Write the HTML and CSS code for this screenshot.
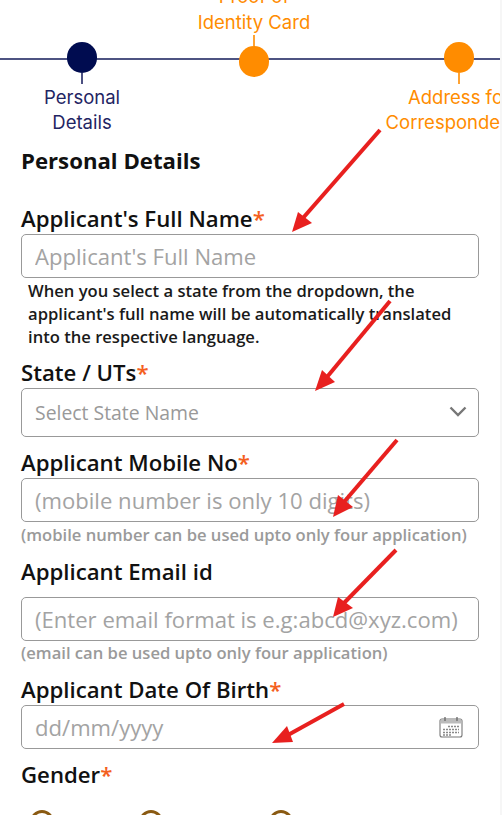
FILE: index.html
```html
<!DOCTYPE html>
<html>
<head>
<meta charset="UTF-8">
<title>Applicant Personal Details</title>
<meta name="viewport" content="width=device-width, initial-scale=1.0">
<link rel="stylesheet" href="styles.css">
</head>
<body>
<div class="page">

  <!-- STEPPER -->
  <div class="stepper">
    <div class="step step-first active">
      <span class="dot"></span>
      <span class="tick"></span>
      <span class="step-label">Personal<br>Details</span>
    </div>
    <div class="step step-up">
      <span class="step-label">Proof of<br>Identity Card</span>
      <span class="tick"></span>
      <span class="dot"></span>
    </div>
    <div class="step step-last">
      <span class="dot"></span>
      <span class="tick"></span>
      <span class="step-label">Address for<br>Correspondence</span>
    </div>
  </div>

  <!-- FORM -->
  <form class="form">
    <h2 class="title">Personal Details</h2>

    <label class="label label-first">Applicant's Full Name<span class="req">*</span></label>
    <input class="field" placeholder="Applicant's Full Name">
    <p class="note">When you select a state from the dropdown, the applicant's full name will be automatically translated into the respective language.</p>

    <label class="label label-state">State / UTs<span class="req">*</span></label>
    <div class="control">
      <select class="field field-select">
        <option>Select State Name</option>
      </select>
      <svg class="chevron" width="18" height="11" viewBox="0 0 18 11"><path d="M1.5 1.5L9 9l7.500-7.500" fill="none" stroke="#777" stroke-width="2.4"/></svg>
    </div>

    <label class="label">Applicant Mobile No<span class="req">*</span></label>
    <input class="field" placeholder="(mobile number is only 10 digits)">
    <p class="hint">(mobile number can be used upto only four application)</p>

    <label class="label label-email">Applicant Email id</label>
    <input class="field" placeholder="(Enter email format is e.g:abcd@xyz.com)">
    <p class="hint hint-email">(email can be used upto only four application)</p>

    <label class="label">Applicant Date Of Birth<span class="req">*</span></label>
    <div class="control">
      <input class="field" placeholder="dd/mm/yyyy">
      <svg class="calendar" width="24" height="22" viewBox="0 0 24 22">
        <rect x="1" y="3" width="22" height="18" rx="2" fill="#fff" stroke="#777" stroke-width="1.1"/>
        <path d="M1.500 3.500h21v4h-21z" fill="#bbb"/>
        <path d="M6 1v4M18 1v4" stroke="#666" stroke-width="1.3"/>
        <path d="M9 10.500h11M4 13.500h16M4 16.500h16M4 19h9" stroke="#888" stroke-width="1.4" stroke-dasharray="2 1"/>
      </svg>
    </div>

    <label class="label">Gender<span class="req">*</span></label>
    <div class="radios">
      <input type="radio" name="gender" class="radio">
      <input type="radio" name="gender" class="radio radio-second">
      <input type="radio" name="gender" class="radio radio-third">
    </div>
  </form>

  <!-- ARROWS drawn on top of the screenshot -->
  <svg class="arrows" width="500" height="815" viewBox="0 0 500 815">
    <g fill="#e8201f" stroke="#e8201f">
      <path d="M380 130L303 218" stroke-width="4" fill="none"/>
      <path d="M292 232L298 212L312 223Z" stroke="none"/>
      <path d="M390 301L327 377" stroke-width="4" fill="none"/>
      <path d="M315 391L322 370L335 382Z" stroke="none"/>
      <path d="M397 440L344 502" stroke-width="4" fill="none"/>
      <path d="M333 517L338 495L353 507Z" stroke="none"/>
      <path d="M396 550L344 603" stroke-width="4" fill="none"/>
      <path d="M333 617L338 597L353 608Z" stroke="none"/>
      <path d="M344 704L288 735" stroke-width="4" fill="none"/>
      <path d="M272 743L287 726L293 742Z" stroke="none"/>
    </g>
  </svg>
</div>
</body>
</html>
```

FILE: styles.css
```css
html,body{
  margin:0; height:100%; overflow:hidden;
  background:#f6f6f6;
}
.page{
  position:relative;
  width:500px; height:815px; overflow:hidden;
  background:#fff;
  font-family:"Open Sans",Arial,sans-serif; color:#111;
}

/* stepper */
.stepper{
  position:relative;
  display:flex; align-items:flex-start;
  height:147px;
}
.stepper::before{
  content:""; position:absolute;
  left:0; right:0; top:58px; height:2px;
  background:#4d5382;
}
.step{
  position:relative;
  flex:none; width:170px;
  display:flex; flex-direction:column; align-items:center;
  font-family:Inter,Arial,sans-serif; font-size:18.5px; line-height:25.5px;
  color:#ff8c00; text-align:center; white-space:nowrap;
}
.step-first{margin-left:-3px;margin-top:42px}
.step-up{margin-left:2px;margin-top:-16px}
.step-last{margin-left:35px;margin-top:42px}
.step.active{color:#1f2563}
.dot{
  width:30.500px; height:30.500px; border-radius:50%;
  background:#ff8c00;
}
.active .dot{background:#000c50}
.tick{width:2px;height:11px;background:currentColor;opacity:.8}
.step-label{display:block}
.step-first .step-label,.step-last .step-label{margin-top:1px}

/* form */
.form{padding:0 21px}
.title{
  margin:0; font-size:22.2px; line-height:28px; font-weight:700;
  color:#111;
}
.label{
  display:block; margin-top:12px;
  font-size:22.2px; line-height:28px; font-weight:600;
  margin-bottom:1px;
}
.label-first{margin-top:30px}
.label-state{margin-top:11px}
.label-email{margin-bottom:11px}
.req{color:#f4601e}
.control{position:relative}
.field{
  display:block; box-sizing:border-box;
  width:458px; height:44px; padding:0 13px; margin:0;
  border:1.5px solid #999; border-radius:5px; outline:none;
  background:#fff;
  font-family:"Open Sans",Arial,sans-serif; font-size:22.1px; color:#333;
}
.field::placeholder{color:#a3a3a3;opacity:1}
.field-select{
  height:49px; font-size:19.4px; color:#999;
  appearance:none; -webkit-appearance:none;
}
.chevron{position:absolute;right:12px;top:18px}
.calendar{position:absolute;right:16px;top:11px}
.note{
  margin:1px 20px 0 7px;
  font-size:16.6px; line-height:23px; font-weight:600;
  color:#1a1a1a;
}
.hint{
  margin:2px 0 0;
  font-size:16.6px; line-height:22px; font-weight:600;
  color:#9a9a9a; white-space:nowrap;
}
.hint-email{margin-top:1px}
.radios{display:flex;margin-top:21px;padding-left:9px}
.radio{
  appearance:none; -webkit-appearance:none;
  flex:none; width:24px; height:24px; margin:0;
  border:3px solid #8a5a12; border-radius:50%;
  background:#fff;
}
.radio-second{margin-left:85px}
.radio-third{margin-left:106px}

/* arrows lie over everything */
.arrows{position:absolute;left:0;top:0;pointer-events:none}
```
